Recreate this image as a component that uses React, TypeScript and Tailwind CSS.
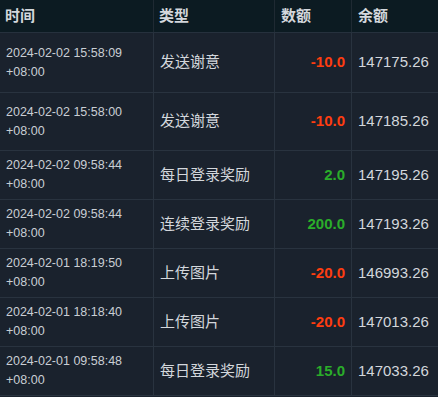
const rows = [
  { time: '2024-02-02 15:58:09', type: '发送谢意', amount: '-10.0', balance: '147175.26', h: 'h-[60px]' },
  { time: '2024-02-02 15:58:00', type: '发送谢意', amount: '-10.0', balance: '147185.26', h: 'h-[58px]' },
  { time: '2024-02-02 09:58:44', type: '每日登录奖励', amount: '2.0', balance: '147195.26', h: 'h-[49px]' },
  { time: '2024-02-02 09:58:44', type: '连续登录奖励', amount: '200.0', balance: '147193.26', h: 'h-[49px]' },
  { time: '2024-02-01 18:19:50', type: '上传图片', amount: '-20.0', balance: '146993.26', h: 'h-[49px]' },
  { time: '2024-02-01 18:18:40', type: '上传图片', amount: '-20.0', balance: '147013.26', h: 'h-[49px]' },
  { time: '2024-02-01 09:58:48', type: '每日登录奖励', amount: '15.0', balance: '147033.26', h: 'h-[49px]' },
]

const font = { fontFamily: '"Liberation Sans", "Noto Sans CJK SC", sans-serif' }

export default function App() {
  return (
    <div className="w-[438px] h-[397px] bg-[#1a222d] overflow-hidden text-[#d3d7dc]" style={font}>
      {/* Header */}
      <div className="grid grid-cols-[154px_121px_77px_86px] h-[33px] bg-[#0c1b22] border-b border-[#26313d]">
        <div className="border-r border-[#1f2a33] flex items-center pl-[5px] text-[15px] font-bold">时间</div>
        <div className="border-r border-[#1f2a33] flex items-center pl-[5px] text-[15px] font-bold">类型</div>
        <div className="border-r border-[#1f2a33] flex items-center pl-[6px] text-[15px] font-bold">数额</div>
        <div className="flex items-center pl-[6px] text-[15px] font-bold">余额</div>
      </div>

      {rows.map((r, i) => {
        const neg = r.amount.startsWith('-')
        return (
          <div
            key={i}
            className={`grid grid-cols-[154px_121px_77px_86px] border-b border-[#29333f] ${r.h}`}
          >
            <div className="border-r border-[#29333f] flex flex-col justify-center pl-[6px] text-[12.5px] leading-[19px] text-[#c9ced4]">
              <span>{r.time}</span>
              <span>+08:00</span>
            </div>
            <div className="border-r border-[#29333f] flex items-center pl-[6px] text-[15px]">{r.type}</div>
            <div
              className={`border-r border-[#29333f] flex items-center justify-end pr-[6px] text-[15px] font-bold ${
                neg ? 'text-[#ff3d10]' : 'text-[#2aad2a]'
              }`}
            >
              {r.amount}
            </div>
            <div className="flex items-center pl-[6px] text-[15px]">{r.balance}</div>
          </div>
        )
      })}
    </div>
  )
}
